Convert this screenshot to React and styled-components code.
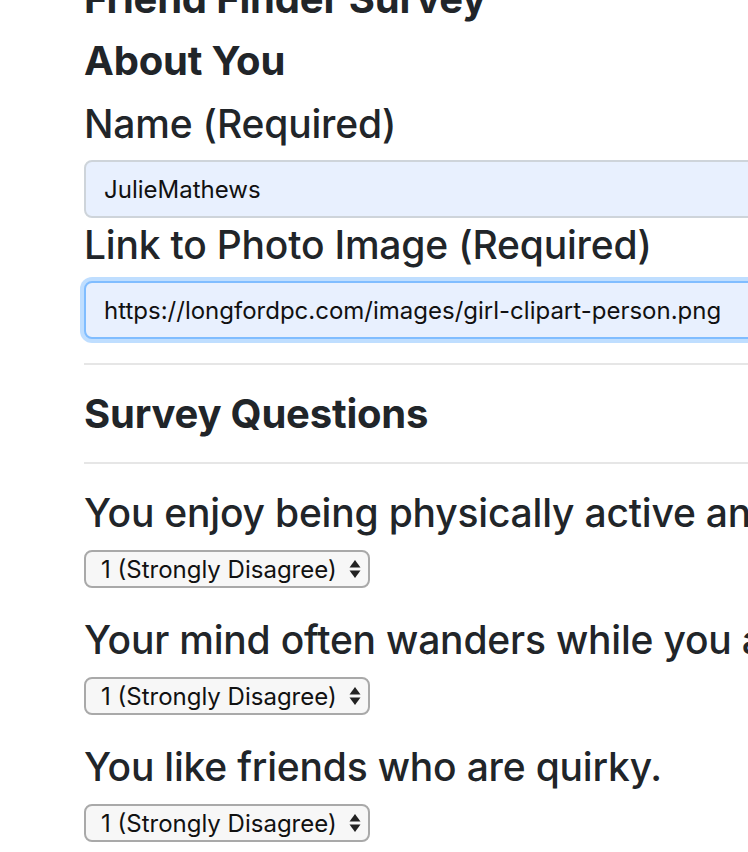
import React, { useEffect, useRef, useState } from 'react'
import styled, { createGlobalStyle } from 'styled-components'

const GlobalStyle = createGlobalStyle`
  html, body {
    margin: 0;
    padding: 0;
    background: #fff;
    overflow: hidden;
  }
  body {
    font-family: Inter, "Liberation Sans", Arial, sans-serif;
    color: #212529;
  }
`;

const Viewport = styled.div`
  width: 100vw;
  overflow: clip;
`;

const Page = styled.div`
  width: 1200px;
  padding-left: 84px;
  margin-top: -25px;
`;

const Title = styled.h1`
  font-size: 40px;
  font-weight: 700;
  line-height: 48px;
  margin: 0 0 14px;
  letter-spacing: -0.2px;
`;

const SectionTitle = styled.h2`
  font-size: 40px;
  font-weight: 700;
  line-height: 48px;
  margin: 0 0 15px;
  letter-spacing: -0.2px;
`;

const Label = styled.label`
  display: block;
  font-size: 39px;
  font-weight: 500;
  line-height: 47px;
  margin: 3px 0 13px;
  letter-spacing: -0.2px;
`;

const Field = styled.input`
  display: block;
  box-sizing: border-box;
  width: 1000px;
  height: 58px;
  padding: 0 18px;
  font-family: Inter, "Liberation Sans", Arial, sans-serif;
  font-size: 24px;
  color: #111;
  background: #e8f0fe;
  border: 2px solid ${p => (p.$focused ? '#80bdff' : '#ced4da')};
  border-radius: 8px;
  outline: none;
  caret-color: #000;
  box-shadow: ${p => (p.$focused ? '0 0 0 4px rgba(0,123,255,.25)' : 'none')};
`;

const Rule = styled.hr`
  border: 0;
  border-top: 2px solid #e6e6e6;
  margin: 24px 0 25px;
`;

const SurveyTitle = styled(SectionTitle)`
  margin: 0;
`;

const Question = styled.div`
  margin-bottom: 28px;
`;

const QuestionText = styled.h4`
  font-size: 39px;
  font-weight: 500;
  line-height: 47px;
  margin: 0 0 14px;
  letter-spacing: -0.2px;
  white-space: nowrap;
`;

const SelectWrap = styled.div`
  position: relative;
  display: inline-block;
`;

const Select = styled.select`
  appearance: none;
  box-sizing: border-box;
  width: 286px;
  height: 38px;
  padding: 0 32px 0 15px;
  font-family: Inter, "Liberation Sans", Arial, sans-serif;
  font-size: 24px;
  color: #111;
  background: #f7f7f7;
  border: 2px solid #a9a9a9;
  border-radius: 8px;
  outline: none;
`;

const Arrows = styled.svg`
  position: absolute;
  right: 9px;
  top: 50%;
  transform: translateY(-50%);
  pointer-events: none;
`;

const questions = [
  'You enjoy being physically active and trying new things.',
  'Your mind often wanders while you are talking with others.',
  'You like friends who are quirky.',
];

function Answer() {
  return (
    <SelectWrap>
      <Select defaultValue="1">
        <option value="1">1 (Strongly Disagree)</option>
        <option value="2">2</option>
        <option value="3">3</option>
        <option value="4">4</option>
        <option value="5">5 (Strongly Agree)</option>
      </Select>
      <Arrows width="12" height="20" viewBox="0 0 12 20">
        <path d="M6 1 L11.5 8.5 L0.5 8.5 Z" fill="#222" />
        <path d="M6 19 L11.5 11.5 L0.5 11.5 Z" fill="#222" />
      </Arrows>
    </SelectWrap>
  );
}

export default function App() {
  const [name, setName] = useState('JulieMathews');
  const [photo, setPhoto] = useState('https://longfordpc.com/images/girl-clipart-person.png');
  const photoRef = useRef(null);

  useEffect(() => {
    const el = photoRef.current;
    if (el) {
      el.focus({ preventScroll: true });
      el.setSelectionRange(el.value.length, el.value.length);
      window.scrollTo(0, 0);
    }
  }, []);

  return (
    <Viewport>
      <GlobalStyle />
      <Page>
        <Title>Friend Finder Survey</Title>
        <SectionTitle>About You</SectionTitle>
        <Label htmlFor="name">Name (Required)</Label>
        <Field id="name" value={name} onChange={e => setName(e.target.value)} />
        <Label htmlFor="photo">Link to Photo Image (Required)</Label>
        <Field id="photo" ref={photoRef} $focused value={photo} onChange={e => setPhoto(e.target.value)} />
        <Rule />
        <SurveyTitle>Survey Questions</SurveyTitle>
        <Rule />
        {questions.map(q => (
          <Question key={q}>
            <QuestionText>{q}</QuestionText>
            <Answer />
          </Question>
        ))}
      </Page>
    </Viewport>
  );
}
